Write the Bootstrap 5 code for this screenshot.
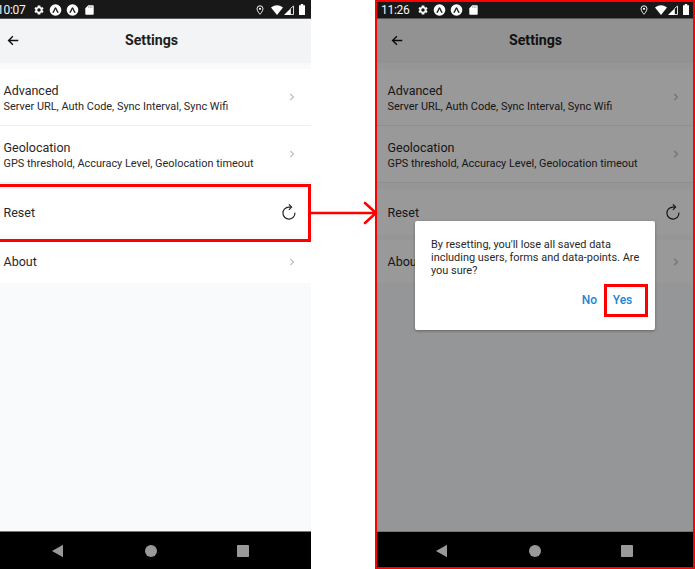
<!DOCTYPE html>
<html lang="en">
<head>
<meta charset="utf-8">
<meta name="viewport" content="width=device-width, initial-scale=1">
<title>Settings</title>
<link href="https://cdn.jsdelivr.net/npm/bootstrap@5.3.0/dist/css/bootstrap.min.css" rel="stylesheet">
<style>
body{font-family:Roboto,"Liberation Sans",sans-serif;color:#28282a;background:#fff;width:695px;height:569px}
.phone{width:320px;height:569px;background:#f9fafc}
.phone-left{margin-left:-9px}
.phone-right{margin-left:64px}
.status{height:19px;background:#181818;border-bottom:1px solid #58585a;color:#f4f4f4;font-size:12px;line-height:18px;padding:1px 6px 0}
.status svg,.softkeys svg{display:block;flex:none}
.clock{width:36px;letter-spacing:-.3px}
.gap-sd{margin-left:6px}
.gap-pin{margin-right:7px}
.gap-cell{margin:0 5px 0 1px}
.appbar{height:44px;background:#f3f4f6;margin-bottom:6px;padding:0 27px 2px 16px}
.appbar h1{font-size:14.2px;font-weight:700;line-height:18px;color:#1e1e20}
.rowitem{background:#fff;padding:0 13px 0 12.500px}
.rowitem svg{flex:none}
.chev{margin-right:3px}
.two{height:57px}
.two .s,.two .t{position:relative;top:1.500px}
.line{border-bottom:1px solid #eeeff0}
.t{font-size:12.500px;line-height:16px}
.s{font-size:10.920px;line-height:16px;white-space:nowrap}
.reset{height:46px;margin:6px 0 5px}
.reset .t{padding-top:1px}
.about{height:43px}
.about .t{padding-top:1px}
.softkeys{height:38px;background:#000;border-top:1px solid #757577;padding-left:61px}
.shade{top:19px;bottom:38px;background:rgba(0,0,0,.4)}
.frame{border:2px solid #f00}
.dialog{left:40px;top:202px;width:240px;height:109px;background:#fff;border-radius:2px;padding:17px 7px 0 16px;box-shadow:0 1px 3px rgba(0,0,0,.35)}
.dialog p{font-size:10.950px;line-height:13px;white-space:nowrap;margin-bottom:7px}
.act{font-size:12px;font-weight:500;line-height:16px;color:#1c84d6;padding-bottom:1px}
.gap-no{margin-right:7px}
.yes{width:44px;height:33px;border:3px solid #f00;padding-right:7px}
.mark-reset{left:-3px;top:184px;width:314px;height:58px;border:3px solid #f00}
.link-arrow{left:310px;top:200px}
</style>
</head>
<body class="overflow-hidden position-relative">
<svg class="d-none">
  <symbol id="gear" viewBox="0 0 24 24"><path fill-rule="evenodd" d="M19.1 12.9a7 7 0 0 0 0-1.8l2-1.6-2-3.4-2.5 1a7 7 0 0 0-1.5-.9L14.7 3H9.3l-.4 3.200a7 7 0 0 0-1.500.9l-2.500-1-2 3.400 2 1.600a7 7 0 0 0 0 1.800l-2 1.600 2 3.400 2.500-1a7 7 0 0 0 1.500.9l.4 3.200h5.400l.4-3.200a7 7 0 0 0 1.500-.9l2.500 1 2-3.400zM12 15.400a3.400 3.400 0 1 1 0-6.800 3.400 3.400 0 0 1 0 6.800z"/></symbol>
  <symbol id="expo" viewBox="0 0 12 12"><circle cx="6" cy="6" r="5.800"/><path d="M3.600 8.200C4.800 7 5.300 4 6 4s1.200 3 2.400 4.200" fill="none" stroke="#181818" stroke-width="1.300" stroke-linecap="round"/></symbol>
  <symbol id="sd" viewBox="0 0 9 10"><path d="M3.200.3H8q.7 0 .7.7v8q0 .7-.7.700H1q-.7 0-.7-.7V3.200z"/><path d="M3.700 1.300v1.500M5.300 1.300v1.500M6.900 1.300v1.500" stroke="#555" stroke-width=".6"/></symbol>
  <symbol id="pin" viewBox="0 0 8 10"><path d="M4 .8a3 3 0 0 0-3 3C1 6 4 9.300 4 9.300S7 6 7 3.800a3 3 0 0 0-3-3z" fill="none" stroke="#f4f4f4"/><circle cx="4" cy="3.800" r="1.100"/></symbol>
  <symbol id="wifi" viewBox="0 0 12 10"><path d="M0 2.600Q6-1.900 12 2.600L6 10z"/></symbol>
  <symbol id="cell" viewBox="0 0 10 10"><path d="M0 10L6.800 3.200V10z"/><path d="M6.500 3.500L9.500 1v8.500H6" fill="none" stroke="#f4f4f4" stroke-width=".9"/></symbol>
  <symbol id="batt" viewBox="0 0 6 11"><path d="M1.800 0h2.400v1.200H6V11H0V1.200h1.800z"/></symbol>
  <symbol id="back" viewBox="0 0 10 10"><path d="M9.800 5H1M4.900 1.100L1 5l3.900 3.900" fill="none" stroke="#111" stroke-width="1.300"/></symbol>
  <symbol id="chev" viewBox="0 0 6 8"><path d="M1.300 1L4.500 4l-3.200 3" fill="none" stroke="#bdbdc0" stroke-width="1.100"/></symbol>
  <symbol id="reload" viewBox="0 0 16 18"><path d="M13.900 9.600A6 6 0 1 1 7.900 4.100H10" fill="none" stroke="#222" stroke-width="1.200"/><path d="M7.900 1.400L10.600 4.100 7.900 6.800" fill="none" stroke="#222" stroke-width="1.200"/></symbol>
</svg>
<main class="d-flex">
  <section class="phone phone-left d-flex flex-column flex-shrink-0">
    <div class="status d-flex align-items-center">
      <span class="clock">10:07</span>
      <svg width="12" height="12" fill="#f8f8f8"><use href="#gear"/></svg>
      <svg class="ms-1" width="13" height="12" fill="#fff"><use href="#expo"/></svg>
      <svg class="ms-1" width="13" height="12" fill="#fff"><use href="#expo"/></svg>
      <svg class="gap-sd" width="9" height="10" fill="#fff"><use href="#sd"/></svg>
      <div class="ms-auto d-flex align-items-center">
        <svg width="8" height="10" fill="#fff" class="gap-pin"><use href="#pin"/></svg>
        <svg width="12" height="10" fill="#fff"><use href="#wifi"/></svg>
        <svg width="10" height="10" fill="#fff" class="gap-cell"><use href="#cell"/></svg>
        <svg width="6" height="11" fill="#fff"><use href="#batt"/></svg>
      </div>
    </div>
    <header class="appbar d-flex align-items-center">
      <svg width="12" height="11"><use href="#back"/></svg>
      <h1 class="m-0 flex-fill text-center">Settings</h1>
    </header>
    <div class="rowitem two line d-flex align-items-center justify-content-between"><div><div class="t">Advanced</div><div class="s">Server URL, Auth Code, Sync Interval, Sync Wifi</div></div><svg class="chev" width="6" height="8"><use href="#chev"/></svg></div>
    <div class="rowitem two line d-flex align-items-center justify-content-between"><div><div class="t">Geolocation</div><div class="s">GPS threshold, Accuracy Level, Geolocation timeout</div></div><svg class="chev" width="6" height="8"><use href="#chev"/></svg></div>
    <div class="rowitem reset d-flex align-items-center justify-content-between"><div class="t">Reset</div><svg width="18" height="18"><use href="#reload"/></svg></div>
    <div class="rowitem about d-flex align-items-center justify-content-between"><div class="t">About</div><svg class="chev" width="6" height="8"><use href="#chev"/></svg></div>
    <footer class="softkeys mt-auto d-flex align-items-center">
      <svg width="198" height="14" fill="#999"><path d="M0 7L11 .8V13.200z"/><circle cx="99" cy="7" r="6"/><rect x="185" y="1" width="12" height="12" rx=".7"/></svg>
    </footer>
  </section>

  <section class="phone phone-right d-flex flex-column flex-shrink-0 position-relative">
    <div class="status d-flex align-items-center">
      <span class="clock">11:26</span>
      <svg width="12" height="12" fill="#f8f8f8"><use href="#gear"/></svg>
      <svg class="ms-1" width="13" height="12" fill="#fff"><use href="#expo"/></svg>
      <svg class="ms-1" width="13" height="12" fill="#fff"><use href="#expo"/></svg>
      <svg class="gap-sd" width="9" height="10" fill="#fff"><use href="#sd"/></svg>
      <div class="ms-auto d-flex align-items-center">
        <svg width="8" height="10" fill="#fff" class="gap-pin"><use href="#pin"/></svg>
        <svg width="12" height="10" fill="#fff"><use href="#wifi"/></svg>
        <svg width="10" height="10" fill="#fff" class="gap-cell"><use href="#cell"/></svg>
        <svg width="6" height="11" fill="#fff"><use href="#batt"/></svg>
      </div>
    </div>
    <header class="appbar d-flex align-items-center">
      <svg width="12" height="11"><use href="#back"/></svg>
      <h1 class="m-0 flex-fill text-center">Settings</h1>
    </header>
    <div class="rowitem two line d-flex align-items-center justify-content-between"><div><div class="t">Advanced</div><div class="s">Server URL, Auth Code, Sync Interval, Sync Wifi</div></div><svg class="chev" width="6" height="8"><use href="#chev"/></svg></div>
    <div class="rowitem two line d-flex align-items-center justify-content-between"><div><div class="t">Geolocation</div><div class="s">GPS threshold, Accuracy Level, Geolocation timeout</div></div><svg class="chev" width="6" height="8"><use href="#chev"/></svg></div>
    <div class="rowitem reset d-flex align-items-center justify-content-between"><div class="t">Reset</div><svg width="18" height="18"><use href="#reload"/></svg></div>
    <div class="rowitem about d-flex align-items-center justify-content-between"><div class="t">About</div><svg class="chev" width="6" height="8"><use href="#chev"/></svg></div>
    <footer class="softkeys mt-auto d-flex align-items-center">
      <svg width="198" height="14" fill="#999"><path d="M0 7L11 .8V13.200z"/><circle cx="99" cy="7" r="6"/><rect x="185" y="1" width="12" height="12" rx=".7"/></svg>
    </footer>
    <div class="shade position-absolute start-0 end-0">
      <div class="dialog position-absolute">
        <p>By resetting, you'll lose all saved data<br>including users, forms and data-points. Are<br>you sure?</p>
        <div class="d-flex justify-content-end align-items-center">
          <span class="act gap-no">No</span>
          <span class="act yes d-flex align-items-center justify-content-center">Yes</span>
        </div>
      </div>
    </div>
    <div class="frame position-absolute top-0 start-0 w-100 h-100"></div>
  </section>
</main>
<div class="mark-reset position-absolute"></div>
<svg class="link-arrow position-absolute" width="68" height="26" fill="none" stroke="#f00" stroke-width="2.600"><path d="M0 13h66M55 3l11 10-11 10" stroke-linecap="round"/></svg>
<script src="https://cdn.jsdelivr.net/npm/bootstrap@5.3.0/dist/js/bootstrap.bundle.min.js"></script>
</body>
</html>
